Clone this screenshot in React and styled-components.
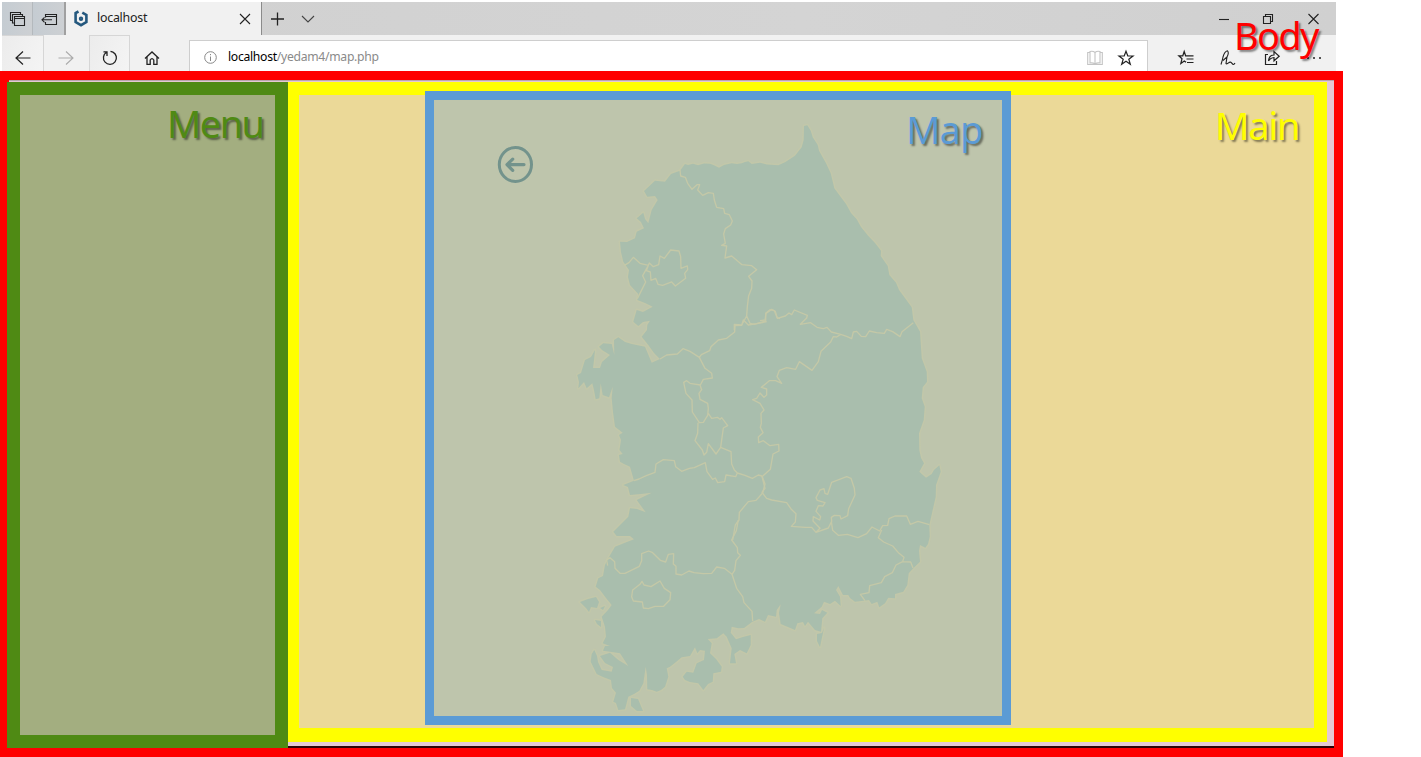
import React from "react";
import styled, { createGlobalStyle } from "styled-components";

const GlobalStyle = createGlobalStyle`
  *, *::before, *::after { box-sizing: border-box; }
  body { margin: 0; background: #fff; font-family: "Noto Sans", "Open Sans", sans-serif; overflow: hidden; }
  svg { display: block; flex: none; overflow: visible; }
`;

const Page = styled.div`
  position: relative;
  width: 1421px;
  height: 757px;
  display: flex;
  flex-direction: column;
`;

const Browser = styled.header`
  width: 1334px;
  height: 69px;
  margin: 2px 0 0 2px;
  flex: none;
`;

const TabStrip = styled.div`
  display: flex;
  height: 33px;
  background: linear-gradient(90deg, #d0d0d0, #d4d4d4 60%, #d0d0d0);
`;

const StripButton = styled.div`
  width: ${(p) => p.$w}px;
  display: flex;
  align-items: center;
  justify-content: center;
  background: linear-gradient(90deg, #c5ccd2, #cdd0d3);
  border-right: ${(p) => (p.$last ? "2px solid #a0a0a0" : "1px solid #b4b9bd")};
`;

const Tab = styled.div`
  width: 196px;
  display: flex;
  align-items: center;
  padding: 0 11px 0 8px;
  background: #f1f1f1;
  border-right: 1px solid #8b8b8b;
`;

const TabTitle = styled.span`
  flex: 1;
  margin-left: 9px;
  font-size: 12.4px;
  line-height: 30px;
  letter-spacing: -0.25px;
  color: #222;
  height: 32px;
`;

const StripIcons = styled.div`
  display: flex;
  align-items: center;
  gap: 17px;
  padding-left: 9px;
  flex: 1;
`;

const WindowButtons = styled.div`
  display: flex;
  align-items: center;
  gap: 34px;
  padding-right: 17px;
`;

const Toolbar = styled.div`
  display: flex;
  height: 36px;
  background: #f1f1f1;
`;

const NavButton = styled.div`
  width: ${(p) => p.$w}px;
  display: flex;
  align-items: center;
  justify-content: center;
  padding-top: 8px;
  border: solid ${(p) => (p.$edge ? "#d6d6d6" : "transparent")};
  border-width: 1px 1px 0 ${(p) => (p.$edge === "both" ? "1px" : "0")};
  background: ${(p) => (p.$edge ? "linear-gradient(110deg,#ececec,#f4f4f4)" : "none")};
`;

const Address = styled.div`
  width: 959px;
  margin: 5px 0 0 14px;
  display: flex;
  align-items: center;
  background: #fff;
  border: solid #cecece;
  border-width: 1px 1px 0;
  padding: 3px 13px 0 14px;
  gap: 15px;
`;

const Url = styled.span`
  flex: 1;
  margin-left: -4px;
  margin-top: -2px;
  font-size: 12.2px;
  letter-spacing: -0.3px;
  color: #8a8a8a;
  b { font-weight: 400; color: #000; }
`;

const ToolIcons = styled.div`
  flex: 1;
  display: flex;
  align-items: center;
  justify-content: space-between;
  padding: 9px 14px 0 30px;
`;

const BodyFrame = styled.main`
  width: 1343px;
  height: 686px;
  display: flex;
  flex-direction: column;
  border: solid #f00;
  border-width: 9px 9px 9px 7px;
  background: #e5c9d3;
`;

const TopLine = styled.div`
  height: 2px;
  border-left: 2px solid #f00;
  background: linear-gradient(#b9a5ac 50%, #e5c9d3 50%);
`;

const Columns = styled.div`
  flex: 1;
  display: flex;
`;

const MenuPanel = styled.nav`
  width: 281px;
  border: solid #4f8a14;
  border-width: 13px;
  background: #a3ae80;
  display: flex;
  justify-content: flex-end;
  padding-right: 10px;
`;

const MainColumn = styled.div`
  flex: 1;
  border-bottom: 2px solid #2b0309;
`;

const MainPanel = styled.section`
  width: 1039px;
  height: 660px;
  border: solid #ff0;
  border-width: 13px 13px 14px 11px;
  background: #ebd998;
  display: flex;
  justify-content: space-between;
  padding: 0 13px 0 126px;
`;

const MapPanel = styled.div`
  position: relative;
  width: 586px;
  height: 634px;
  margin-top: -4px;
  border: 9px solid #5b9bd5;
  background: #bec5ac;
`;

const Label = styled.div`
  width: ${(p) => p.$w}px;
  height: 54px;
  margin-top: ${(p) => p.$top || 0}px;
  font-family: "Noto Sans", sans-serif;
  font-weight: 400;
  font-size: 38px;
  line-height: 56px;
  letter-spacing: ${(p) => p.$track || 0}px;
  white-space: nowrap;
  color: ${(p) => p.$color};
  text-shadow: 2px 2px 2px rgba(0, 0, 0, 0.45);
`;

const BodyLabel = styled(Label)`
  position: absolute;
  left: 1234px;
  top: 7px;
`;

const MapLabel = styled(Label)`
  position: absolute;
  right: 19px;
  top: 1px;
`;

const Icon = ({ w = 16, h = 16, color = "#222", sw = 1.1, children }) => (
  <svg width={w} height={h} viewBox={`0 0 ${w} ${h}`} fill="none" stroke={color} strokeWidth={sw}>
    {children}
  </svg>
);

const LAND = `M680 170.7L685 164 688 165 693 163.7 698 165.3 704 163.5 710 163.7 714 165.2 719 167.7 724 165 731.7 163.3 737 164 741.7 163.3 745 162 748.3 161.3 751.7 164 760 162.7 767 164.5 778.3 165.3 785 162.3 795 155.7 801.7 147.3 803.7 140 804 126 807.3 125.3 810.7 130.7 812.7 137.3 817.7 145 819 150.7 826 163.3 830.7 173.3 834.3 188.3 840 196 846 204 851 213 856.7 219.3 861 227 868.3 236 875 243 881 250.7 880.7 256 887.7 266 889.3 275 896 282.7 899 290 904 296.7 911.7 307.3 913.3 320 920 331.7 921.7 358.3 926.7 371.7 927 381.7 922.7 387.3 921.7 398.3 924.7 406.7 923.7 420 919 433.3 919.3 450 921 458 924 463.3 919.3 471.7 926 477.7 931.7 474 934 470 939.3 465.3 940.7 471.7 936 485 935.7 496.7 932.7 510 929.3 525 929.7 536.7 928 544 925.3 547.7 920 545 919 551 920 561.7 913.3 568.3 908.7 573.3 907.3 585 903.3 591.7 895 594 895 598.3 888.3 597.7 885 603.3 879.3 607.3 877.3 601.7 871.7 604 869 600 863.3 600.7 855 601.7 850 598 848.3 595 843 595 838.3 586 836 590 840 596.7 840.7 606 835 600.7 830 604 824 601.7 821.7 606.7 814 613.3 820 614 822 610 827.3 612.7 822.3 618.3 821 631.7 815 630 808 621.7 805 626 803 622 797.3 623.3 795 630 788 627 780.7 624 779 613 780.7 604.3 776.7 610 776 616.7 768 615 765 621.7 759 619 752.3 621.7 744 628 738.3 628.3 731.7 626.7 730.7 632.7 736 639.3 743 637 750.7 635 750.7 645 746.7 653.3 740 650 734.3 654 736 663.3 730 663.3 731.7 648.3 726.7 636.7 723.3 633.3 716.7 638.3 707.7 639 711.7 643.3 710 653.3 716 659 721.7 666.7 721 671.7 713.3 673.3 712.7 681.7 708 684 703.3 690 698.3 683.3 690 682 685 680 682.7 676.7 686.7 671.7 693.3 672.7 696.7 663.3 704 660 705 650.7 700 650 697.3 653.3 695 647.3 690 656 681.7 657.3 676 662 670 666.7 666.7 668.3 668.3 676.7 665 686.7 661 690 656.7 691.7 652 690 647.3 689.3 647 675 645.7 666.7 643.3 683.3 639.3 690.7 634 694 628.3 696.7 625 709.3 618.3 710 616 703 613.3 701.7 616 692.7 612 688 611 680 603 677 596.7 674 590.7 661.7 591.7 654 594.3 650 597 656 598 662 601.7 670 611.7 671.7 613 667 605 663 600 656 610 652.7 618.3 660 628.3 666 620 653.3 612 652 603 650.7 605 646 610 646 602.7 643.3 606 636.7 605 626.7 601.7 616.7 608 610 611.7 605 606 598 600 590 595.7 586.7 598.3 578.3 603 576 605 565 608.3 558.3 615 546.7 625 542.7 634 539.3 630 536 616.7 536 613.3 531.7 628.3 516.7 630 508.3 637 509 645.7 512.3 636.7 500 651.7 492.7 641 494 630 495 628 487 623.3 485 634 480.7 630 466.7 624 464 620 461.7 619 455 622.7 454 619.5 450 621 440 619 435 622.7 432.7 615 426.7 613 412 611.7 398.3 612.7 386.7 609 397.3 602.7 395 600.7 383.3 599.3 398.3 595.7 399.3 594 390 592.3 383.3 586.7 388.3 584 382 578.3 388.3 579 382 577.3 375 581 373 585 360 591 357 595 350 594 360 593 368 600 368 602 362 610 355 602 350 599 346.7 603.3 343.3 611.7 344 614.3 355 614 340 618.3 337.3 625 342 631.7 344 645 346.7 648 354 651.7 362.7 660 359 654 353 648.3 345 641.7 336.7 647 330 647.3 325 650 320.7 643 322 638.3 326 633.3 321.7 636.7 310 643 312 652.7 306.7 645 303 637.3 300 638.3 294 630 285 628 277 629 270 623.3 261.7 621 252 620 241.7 627 242 635 238.3 636.7 231.7 644 228.3 641 222 636.7 218.3 643.3 212.7 645 219 648.3 223.3 651.7 210 657.7 200 655 196 647.3 196.7 644 191 655 180.7 665 181.7 671 174Z`;

const ISLANDS = `M580 602L588 599 596 597 599 602 597 608 591 607 589 612 586 608ZM595 620L601 621 601 627 597 624ZM631 698L638 699 643 711 637 711 631 706ZM817 634L822 633 824 628 821 642 820 647 817 641ZM600 608L605 606 603 610Z`;

/* Province borders, grouped by the section of the country they run through. */
const BORDERS = [
  {
    x: 560, y: 110,
    d: `M360 180L362 198 376 202 383 220 396 238 411 224 419 224 413 240 428 256 445 248 460 250 463 270 470 292 491 296 494 310 508 314 517 333 512 345 496 356 491 372 496 400 485 406 500 408 495 444 515 438 546 464 575 467 590 479 566 499 576 513 575 535 566 557 562 590 560 618 545 645 523 643 523 660M560 618L570 640 583 643 617 633 617 610 630 599 643 602 651 622 660 626
    M193 466L207 458 220 442 240 460 265 466 268 459 280 470 296 464 300 438 313 445 332 420 357 423 362 440 363 475 382 468 383 479 374 490 377 505 346 528 335 516 308 526 294 523 287 505 273 511 271 486 259 482 265 466M263 470L248 497 257 516 240 550 232 566`,
  },
  {
    x: 740, y: 310,
    d: `M60 32L75 30 78 10 95 -2 106 4 112 25 136 18 147 9 155 14 163 0 202 16 200 24 181 43 212 38 231 52 250 56 261 52 274 66 302 73 320 79 335 86 340 66 350 64 364 79 377 80 388 63 410 68 433 70 440 58 458 65 480 80 486 65 520 38
    M302 73L290 81 280 80 272 96 243 124 235 155 216 181 178 155 167 178 140 173 118 181 111 200 125 220 107 212 88 212 64 232 80 237 80 255 72 262 60 249 50 265 38 269 60 280 72 300 63 310 64 340 61 352 69 368 55 381 56 398 70 392 90 407 116 403 117 423 99 432 91 478 66 500 75 535 66 547 80 565 95 570 140 578 153 597 168 611 166 636 154 649 196 652 215 652 228 667 240 655 219 633 220 620 239 630 242 620 228 604 235 587 249 588 255 578 232 571 228 563 240 540 252 536 255 550 263 553 275 517 320 500 333 505 343 535 345 555 326 596 323 617 303 627 300 617 283 616 274 622 275 634 265 654 228 667
    M274 635L278 661 295 676 322 673 354 683 380 671 396 651 419 663 428 647 443 646 447 626 465 618 500 618 511 643 534 634 568 644`,
  },
  {
    x: 560, y: 320,
    d: `M300 117L320 105 352 102 369 86 390 94 418 112 435 145 455 160 457 174 430 178 421 195 390 190 380 182 371 187 378 220 396 240 397 276 418 308 430 307 443 286 445 265 443 250 420 238 417 220 425 209 420 195
    M418 112L424 104 449 92 453 80 475 60 500 55 524 36 525 17 545 16 550 0 565 15 590 11 620 5
    M445 280L455 295 472 292 480 298 485 293 503 317 490 324 482 382 468 402 445 371 440 397 432 405 427 390 405 362 413 340 414 308
    M222 482L237 477 259 467 285 457 288 432 310 419 343 422 347 440 365 454 388 445 403 443 436 428 441 455 458 478 466 474 473 488 494 485 498 465 527 470 532 459 523 450 515 432 513 395 482 382
    M532 459L555 466 577 475 595 465 606 468M606 468L615 492 608 519 588 541 565 545 538 577 537 600 526 615 518 660`,
  },
  {
    x: 560, y: 520,
    d: `M535 0L529 32 515 60 532 83 533 98 541 106 528 122 524 151 516 163 493 145 470 141 455 160 430 161 402 158 387 153 365 165 348 162 348 139 340 132 341 101 325 103 317 126 301 121 278 98 266 93 245 101 245 122 238 139 195 160 180 160 165 145 164 125 150 113 140 120 143 137M516 163L530 205 548 230 552 248 576 274 578 303
    M252 195L273 200 300 183 313 205 332 218 330 239 311 259 285 259 265 266 250 264 247 246 220 243 215 230 218 210 240 193 246 184Z`,
  },
  {
    x: 740, y: 450,
    d: `M425 240L415 263 431 276 458 288 477 310 492 322 488 335 468 345 457 368 434 380 424 398 389 407 387 428 361 433 375 452M488 335L512 336 519 354`,
  },
];

function KoreaMap() {
  return (
    <svg width="568" height="616" viewBox="434 100 568 616">
      <path d={LAND + ISLANDS} fill="#a9bead" stroke="#c2c7a9" strokeWidth="3" strokeLinejoin="round" style={{ paintOrder: "stroke" }} />
      {BORDERS.map((b, i) => (
        <g key={i} transform={`translate(${b.x} ${b.y}) scale(.33333)`}>
          <path d={b.d} fill="none" stroke="#c4c8a7" strokeWidth="4" strokeLinejoin="round" />
        </g>
      ))}
      <g fill="none" stroke="#73938c" strokeWidth="3">
        <ellipse cx="515.4" cy="164.5" rx="16.1" ry="17" />
        <path d="M524 164.6H508M512.7 159.2L507 164.6 512.7 170.4" strokeLinecap="round" strokeLinejoin="round" strokeWidth="3.2" />
      </g>
    </svg>
  );
}

export default function App() {
  return (
    <>
      <GlobalStyle />
      <Page>
        <Browser>
          <TabStrip>
            <StripButton $w={31}>
              <Icon color="#222"><path d="M3.5 9.5H1.5V1.5H11.5V3.5M5.5 12H3.5V3.5H13.5V5.5M5.5 5.5H15.5V14.5H5.5ZM5.5 7.5H15.5" /></Icon>
            </StripButton>
            <StripButton $w={33} $last>
              <Icon color="#222"><path d="M4.5 6.5V3.5H15.5V13.5H4.5V11M4.5 5.5H15.5M11 8.8H1M3.5 6.3L1 8.8 3.5 11.3" /></Icon>
            </StripButton>
            <Tab>
              <Icon w={14} h={17} color="#24587e" sw={2.6}>
                <path d="M4.5 1.5L1.6 3V12L7 15.2 12.4 12V5L8.3 2.6" />
                <circle cx="7" cy="8.7" r="1.2" strokeWidth="2" />
              </Icon>
              <TabTitle>localhost</TabTitle>
              <Icon w={10} h={12}><path d="M0 1L10 11M10 1L0 11" /></Icon>
            </Tab>
            <StripIcons>
              <Icon w={14} h={14} sw={1.3}><path d="M6.5 .5V13.5M0 7H13" /></Icon>
              <Icon w={14} h={8} color="#444"><path d="M0 1L6 7 12 1" /></Icon>
            </StripIcons>
            <WindowButtons>
              <Icon w={10} h={12}><path d="M0 6.5H10" /></Icon>
              <Icon w={11} h={12}><path d="M.5 3.5H7.5V10.5H.5ZM2.5 3V1.5H9.5V8.5H8" /></Icon>
              <Icon w={11} h={12}><path d="M.5 1L10.5 11M10.5 1L.5 11" /></Icon>
            </WindowButtons>
          </TabStrip>
          <Toolbar>
            <NavButton $w={42} $edge="right"><Icon sw={1.2}><path d="M15.5 8H1M8 1.5L1 8 8 14.5" /></Icon></NavButton>
            <NavButton $w={45}><Icon color="#ababab"><path d="M.5 8H15M8 1.5L15 8 8 14.5" /></Icon></NavButton>
            <NavButton $w={41} $edge="both"><Icon sw={1.3}><path d="M4.5 2.3A6.5 6.5 0 1 0 11 2.1M5 6V1.8H1.5M11 2.1L8.5 1.3" /></Icon></NavButton>
            <NavButton $w={45}><Icon sw={1.3}><path d="M1 8.5L8 2 15 8.5M3 7V14.3H6.2V10Q8 7.2 9.8 10V14.3H13V7" /></Icon></NavButton>
            <Address>
              <Icon w={13} h={13} color="#888" sw={1}><circle cx="6.5" cy="6.5" r="5.8" /><path d="M6.5 5.5V10M6.5 3V4.2" /></Icon>
              <Url><b>localhost</b>/yedam4/map.php</Url>
              <Icon color="#c4c4c4"><path d="M8 2.5V14M8 2.5Q6 .7 3 1.5V13Q6 12.5 8 14 10 12.5 13 13V1.5Q10 .7 8 2.5M3 2.5H.7V14.5H15.3V2.5H13" /></Icon>
              <Icon sw={1.2}><path d="M8 1.2L9.8 6H15L10.8 9.2 12.3 14.3 8 11.2 3.7 14.3 5.2 9.2 1 6H6.2Z" /></Icon>
            </Address>
            <ToolIcons>
              <Icon sw={1.2}><path d="M8 5.8H7.6L6.2 1.5 4.8 5.8H.8L4 8.7 2.8 13.5 6.3 11 8 12.3M7.5 5.8H15.5M8.5 9H15.5M9 12.5H15.5" /></Icon>
              <Icon sw={1.1}><path d="M0 14.5Q1.5 10 2 7 3.5 1.5 6.5 .8 8.3 2.5 6 7L2 10.5M6 7L5 13.5Q5.5 14.5 7.5 12.8T11 13.4 14 13" /></Icon>
              <Icon sw={1.2}><path d="M3 4.5H.5V14.5H11.5V11M3.5 11Q4 5 9 5V1.5L14.2 6.2 9 10.8V7.5Q6 7.5 3.5 11" /></Icon>
              <Icon w={14}><path d="M-1 8H1M5 8H7M11 8H13" strokeWidth="1.5" /></Icon>
            </ToolIcons>
          </Toolbar>
        </Browser>
        <BodyFrame>
          <TopLine />
          <Columns>
            <MenuPanel><Label $w={98} $color="#4f8a14" $track={-1.6}>Menu</Label></MenuPanel>
            <MainColumn>
              <MainPanel>
                <MapPanel>
                  <KoreaMap />
                  <MapLabel $w={77} $color="#5b9bd5" $track={-0.9}>Map</MapLabel>
                </MapPanel>
                <Label $w={86} $top={2} $color="#ff0" $track={-1.2}>Main</Label>
              </MainPanel>
            </MainColumn>
          </Columns>
        </BodyFrame>
        <BodyLabel $w={88} $color="#f00" $track={-1.7}>Body</BodyLabel>
      </Page>
    </>
  );
}
